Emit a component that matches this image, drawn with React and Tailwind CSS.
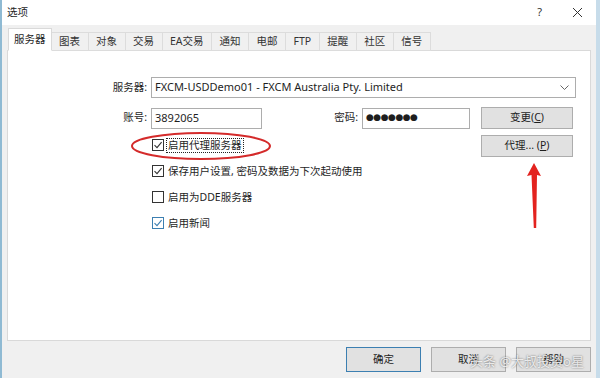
import React from "react";

const CN = "font-['Noto_Sans','Noto_Sans_CJK_SC',sans-serif]";

const tabs = ["服务器", "图表", "对象", "交易", "EA交易", "通知", "电邮", "FTP", "提醒", "社区", "信号"];

function Check({ checked, blue }) {
  return (
    <div
      className={
        "w-[12px] h-[12px] border bg-white flex items-center justify-center " +
        (blue ? "border-[#3c7fb1]" : "border-[#333]")
      }
    >
      {checked && (
        <svg width="10" height="10" viewBox="0 0 10 10">
          <path
            d="M1.5 5.2 L4 7.6 L8.6 2.2"
            fill="none"
            stroke={blue ? "#3c7fb1" : "#333"}
            strokeWidth="1.1"
          />
        </svg>
      )}
    </div>
  );
}

function CheckRow({ checked, blue, focus, children }) {
  return (
    <div className="h-[20px] flex items-center">
      <Check checked={checked} blue={blue} />
      <span
        className={
          "ml-[2px] text-[10.5px] leading-[13px] px-[1px] " +
          (focus ? "border border-dotted border-[#222]" : "border border-transparent")
        }
      >
        {children}
      </span>
    </div>
  );
}

function WinButton({ children, className = "" }) {
  return (
    <div
      className={
        "h-[22px] w-[92px] bg-[#e1e1e1] border border-[#adadad] flex items-center justify-center text-[10.5px] " +
        className
      }
    >
      {children}
    </div>
  );
}

export default function App() {
  return (
    <div
      className={
        "w-[600px] h-[378px] relative overflow-hidden flex flex-col bg-[#f0f0f0] text-[#1e1e1e] border-l-2 border-l-[#8fbad3] border-r-4 border-r-[#c7dcea] " +
        CN
      }
    >
      {/* title bar */}
      <div className="h-[25px] bg-white flex items-center shrink-0">
        <span className="ml-[5px] text-[10.5px]">选项</span>
        <span className="ml-auto text-[11px] text-[#333] mr-[30px]">?</span>
        <svg width="11" height="11" viewBox="0 0 11 11" className="mr-[13px]">
          <path d="M1 1 L10 10 M10 1 L1 10" stroke="#333" strokeWidth="1" />
        </svg>
      </div>

      {/* tab strip */}
      <div className="h-[26px] flex items-end px-[6px] relative z-10 -mb-px shrink-0">
        {tabs.map((t, i) =>
          i === 0 ? (
            <div
              key={t}
              className="h-[23px] px-[5px] bg-white border border-[#d9d9d9] border-b-white flex items-center text-[10.5px]"
            >
              {t}
            </div>
          ) : (
            <div
              key={t}
              className="h-[19px] px-[7.5px] bg-[#f0f0f0] border border-[#dcdcdc] border-l-0 flex items-center text-[10.5px] text-[#333]"
            >
              {t}
            </div>
          )
        )}
      </div>

      {/* panel */}
      <div className="flex-1 mx-[5px] bg-white border border-[#d9d9d9] pt-[26px]">
        <div className="flex items-center h-[21px]">
          <div className="w-[139px] text-right text-[10.5px]">服务器:</div>
          <div className="ml-[4px] w-[425px] h-[21px] border border-[#adadad] flex items-center pl-[3px] pr-[6px]">
            <span className="text-[11px] font-['Noto_Sans',sans-serif]">
              FXCM-USDDemo01 - FXCM Australia Pty. Limited
            </span>
            <svg width="9" height="5" viewBox="0 0 9 5" className="ml-auto">
              <path d="M0.5 0.5 L4.5 4.5 L8.5 0.5" fill="none" stroke="#666" strokeWidth="1" />
            </svg>
          </div>
        </div>

        <div className="flex items-center mt-[9px]">
          <div className="w-[139px] text-right text-[10.5px]">账号:</div>
          <div className="ml-[4px] w-[111px] h-[21px] border border-[#adadad] flex items-center pl-[3px] text-[11px] font-['Noto_Sans',sans-serif]">
            3892065
          </div>
          <div className="w-[96px] text-right text-[10.5px]">密码:</div>
          <div className="ml-[4px] w-[108px] h-[21px] border border-[#adadad] flex items-center pl-[3px] text-[9px] tracking-[-0.5px] font-['DejaVu_Sans',sans-serif]">
            ●●●●●●●
          </div>
          <WinButton className="ml-[11px]">
            变更(<span className="underline font-['Noto_Sans',sans-serif]">C</span>)
          </WinButton>
        </div>

        <div className="flex items-start mt-[6px]">
          <div className="pl-[144px] flex flex-col gap-[6px]">
            <CheckRow checked focus>
              启用代理服务器
            </CheckRow>
            <CheckRow checked>保存用户设置, 密码及数据为下次起动使用</CheckRow>
            <CheckRow>启用为DDE服务器</CheckRow>
            <CheckRow checked blue>
              启用新闻
            </CheckRow>
          </div>
          <WinButton className="ml-auto mr-[17px]">
            代理... (<span className="underline font-['Noto_Sans',sans-serif]">P</span>)
          </WinButton>
        </div>
      </div>

      {/* footer */}
      <div className="h-[37px] shrink-0 flex items-start pt-[6px] pl-[344px] gap-[10px]">
        <div className="w-[75px] h-[25px] bg-[#e1e1e1] border border-[#3c7fb1] flex items-center justify-center text-[10.5px]">
          确定
        </div>
        <div className="w-[75px] h-[25px] bg-[#e1e1e1] border border-[#adadad] flex items-center justify-center text-[10.5px]">
          取消
        </div>
        <div className="w-[75px] h-[25px] bg-[#e1e1e1] border border-[#adadad] flex items-center justify-center text-[10.5px]">
          帮助
        </div>
      </div>

      {/* red annotation: ellipse */}
      <svg className="absolute left-[126px] top-[130px]" width="148" height="34" viewBox="0 0 148 34">
        <ellipse cx="73" cy="16" rx="69" ry="13" fill="none" stroke="#d42a2a" strokeWidth="2" />
      </svg>

      {/* red annotation: arrow */}
      <svg className="absolute left-[518px] top-[158px]" width="28" height="76" viewBox="0 0 28 76">
        <path d="M14 5 L7 18 L11.5 17 L13.8 70 L16.2 70 L17 17 L21 18 Z" fill="#e3231f" />
      </svg>

      {/* watermark */}
      <div className="absolute left-[468px] top-[352px] text-[13px] text-white/80 [text-shadow:0_0_2px_rgba(0,0,0,0.6)] whitespace-nowrap">
        头条 @大叔投资o星
      </div>
    </div>
  );
}
